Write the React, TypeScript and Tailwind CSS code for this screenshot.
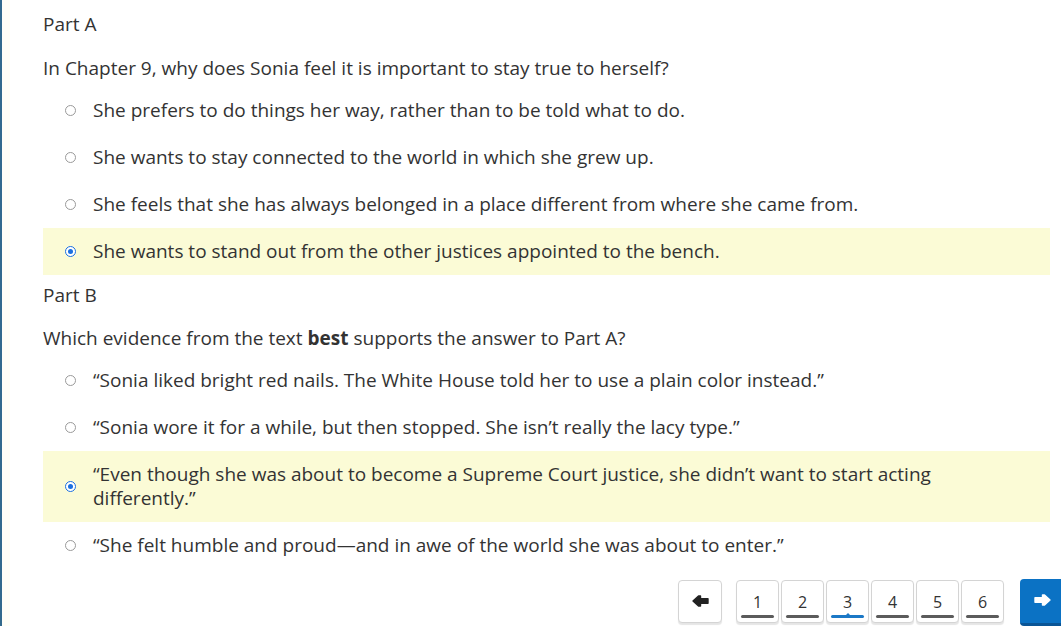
import React from "react";

const font = { fontFamily: '"Open Sans", "Liberation Sans", sans-serif' };

function Arrow({ dir, color }: { dir: "left" | "right"; color: string }) {
  return (
    <svg
      width="17"
      height="12"
      viewBox="0 0 17 12"
      style={{ transform: dir === "right" ? "scaleX(-1)" : undefined }}
    >
      <path
        d="M1 6 L6.5 1 L8.5 1 L8.5 3.7 L16 3.7 L16 8.3 L8.5 8.3 L8.5 11 L6.5 11 Z"
        fill={color}
        stroke={color}
        strokeWidth="1.4"
        strokeLinejoin="round"
      />
    </svg>
  );
}

function Radio({ checked }: { checked?: boolean }) {
  if (checked) {
    return (
      <span className="flex h-[11px] w-[11px] shrink-0 items-center justify-center rounded-full border-[1.5px] border-[#1a6fe0] bg-white">
        <span className="h-[5px] w-[5px] rounded-full bg-[#1a6fe0]" />
      </span>
    );
  }
  return <span className="h-[11px] w-[11px] shrink-0 rounded-full border border-[#9a9a9a] bg-white" />;
}

function Option({ text, checked }: { text: React.ReactNode; checked?: boolean }) {
  return (
    <div
      className={
        "flex items-center py-[11.5px] pl-[22px] pr-[60px] " + (checked ? "bg-[#fbfbd6]" : "")
      }
    >
      <Radio checked={checked} />
      <div className="ml-[17px] text-[19px] leading-[24px] text-[#333]">{text}</div>
    </div>
  );
}

function NumBtn({ n, active }: { n: number; active?: boolean }) {
  return (
    <div className="relative flex h-[43px] w-[43px] flex-col items-center rounded-[4px] border border-[#d4d4d4] bg-white shadow-[0_2px_1px_rgba(0,0,0,0.10)]">
      <span className="mt-[11px] text-[16px] leading-[20px] text-[#333]">{n}</span>
      <span
        className={
          "absolute bottom-[4px] left-[4px] right-[4px] h-[3px] rounded-full " +
          (active ? "bg-[#1b78c6]" : "bg-[#5b5b5b]")
        }
      />
      {active && (
        <span className="absolute bottom-[6px] left-1/2 h-0 w-0 -translate-x-1/2 border-x-[3px] border-b-[3px] border-x-transparent border-b-[#1b78c6]" />
      )}
    </div>
  );
}

export default function App() {
  const a = [
    "She prefers to do things her way, rather than to be told what to do.",
    "She wants to stay connected to the world in which she grew up.",
    "She feels that she has always belonged in a place different from where she came from.",
    "She wants to stand out from the other justices appointed to the bench.",
  ];
  const b = [
    "\u201cSonia liked bright red nails. The White House told her to use a plain color instead.\u201d",
    "\u201cSonia wore it for a while, but then stopped. She isn\u2019t really the lacy type.\u201d",
    "\u201cEven though she was about to become a Supreme Court justice, she didn\u2019t want to start acting differently.\u201d",
    "\u201cShe felt humble and proud\u2014and in awe of the world she was about to enter.\u201d",
  ];
  return (
    <div className="flex h-[626px] w-full overflow-hidden bg-white" style={font}>
      <div className="w-[2px] shrink-0 bg-[#33698c]" />
      <div className="w-[8px] shrink-0 bg-[#fffef6]" />
      <div className="flex min-w-0 flex-1 flex-col pl-[33px] pr-[11px]">
        <div className="mt-[11.5px] text-[19px] leading-[25px] text-[#333]">Part A</div>
        <div className="mt-[19px] text-[19px] leading-[25px] text-[#333]">
          In Chapter 9, why does Sonia feel it is important to stay true to herself?
        </div>
        <div className="mt-[6px] flex flex-col">
          {a.map((t, i) => (
            <Option key={i} text={t} checked={i === 3} />
          ))}
        </div>
        <div className="mt-[8px] text-[19px] leading-[25px] text-[#333]">Part B</div>
        <div className="mt-[18px] text-[19px] leading-[25px] text-[#333]">
          Which evidence from the text <b className="font-bold">best</b> supports the answer to Part A?
        </div>
        <div className="mt-[6px] flex flex-col">
          {b.map((t, i) => (
            <Option key={i} text={t} checked={i === 2} />
          ))}
        </div>
        <div className="mr-[-14px] mt-[11px] flex items-start justify-end">
          <div className="flex h-[43px] w-[44px] items-center justify-center rounded-[4px] border border-[#d4d4d4] bg-white shadow-[0_2px_1px_rgba(0,0,0,0.10)]">
            <Arrow dir="left" color="#222" />
          </div>
          <div className="ml-[14px] flex gap-[2px]">
            {[1, 2, 3, 4, 5, 6].map((n) => (
              <NumBtn key={n} n={n} active={n === 3} />
            ))}
          </div>
          <div className="ml-[16px] mt-[-1px] flex h-[47px] w-[44px] items-start justify-center rounded-[4px] border-b-[3px] border-[#0a5596] bg-[#0b72c4] pt-[15px]">
            <Arrow dir="right" color="#ffffff" />
          </div>
        </div>
      </div>
    </div>
  );
}
